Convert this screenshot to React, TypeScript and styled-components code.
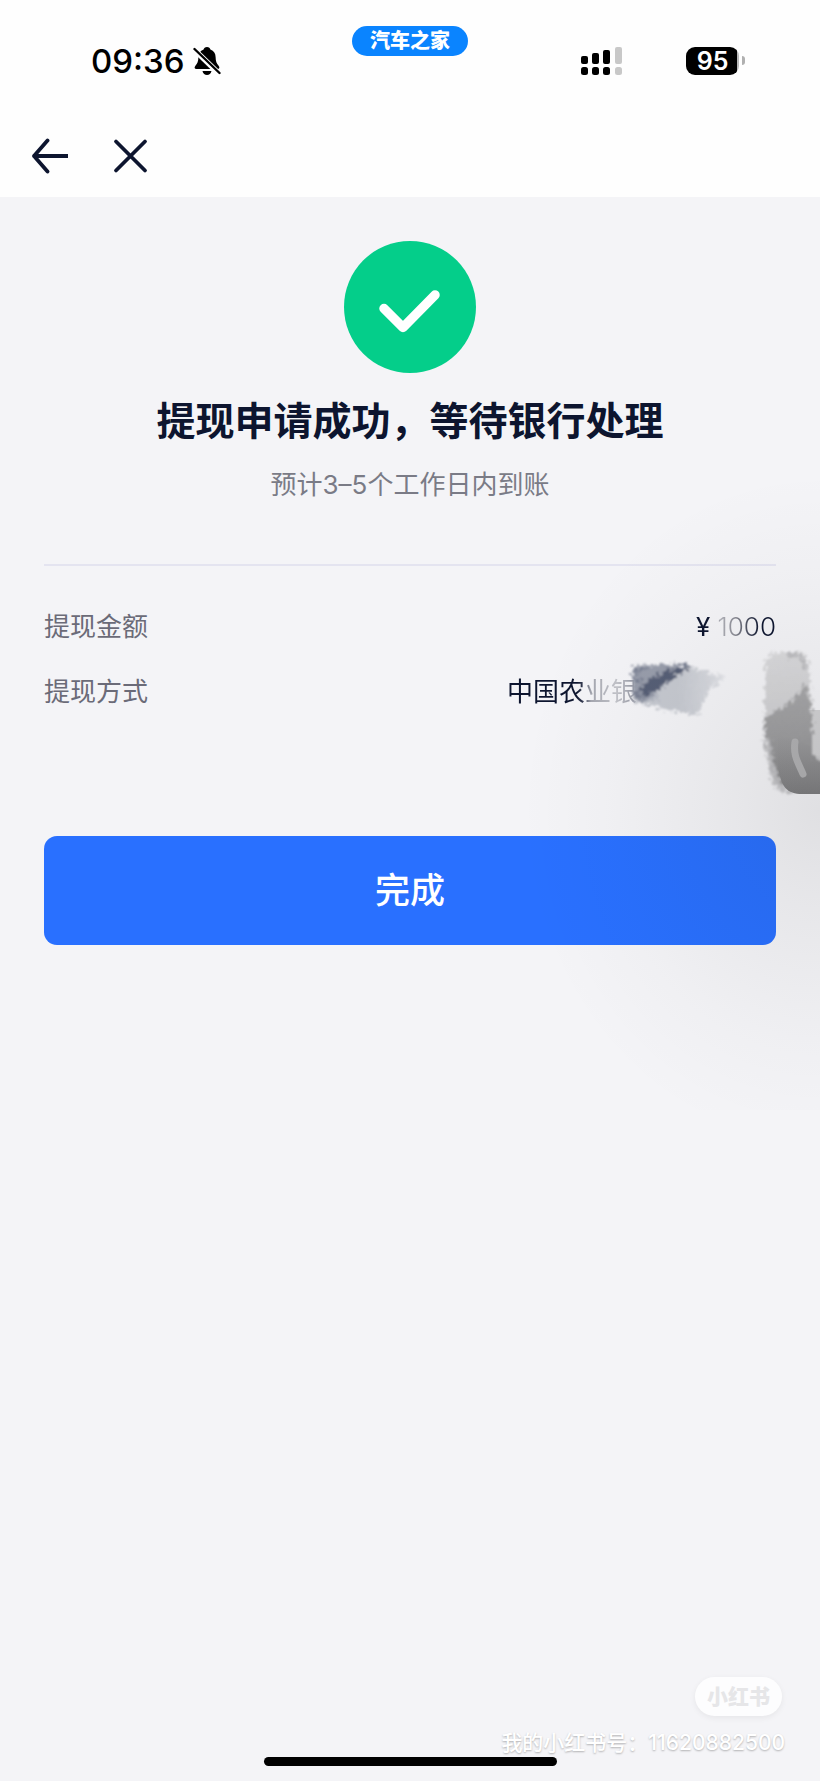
import React from "react";
import styled, { createGlobalStyle } from "styled-components";

const GlobalStyle = createGlobalStyle`
  *, *::before, *::after { box-sizing: border-box; }
  body {
    margin: 0;
    background: #f4f4f7;
    color: #0d152f;
    font-family: Inter, "Noto Sans CJK SC", sans-serif;
  }
`;

const Page = styled.div`
  position: relative;
  display: flex;
  flex-direction: column;
  min-height: 100vh;
  overflow: hidden;
`;

const Header = styled.header`
  background: #fefefe;
`;

const StatusBar = styled.div`
  display: grid;
  grid-template-columns: 1fr auto 1fr;
  align-items: center;
  height: 121px;
  color: #000;
`;

const StatusLeft = styled.div`
  display: flex;
  align-items: center;
  gap: 8px;
  padding-left: 91px;
`;

const Clock = styled.time`
  font-size: 33px;
  line-height: 40px;
  font-weight: 500;
`;

const AppPill = styled.div`
  align-self: start;
  margin-top: 26px;
  padding: 0 18px;
  border-radius: 15px;
  background: #0a84ff;
  color: #fff;
  font-size: 20px;
  line-height: 30px;
  font-weight: 900;
`;

const StatusRight = styled.div`
  display: flex;
  align-items: center;
  justify-content: flex-end;
  gap: 64px;
  padding-right: 75px;
`;

const Battery = styled.div`
  display: flex;
  align-items: center;
  gap: 3px;
`;

const BatteryBody = styled.span`
  width: 53px;
  height: 28px;
  border-radius: 9px;
  background: linear-gradient(to right, #000 51px, #b8b8b8 51px);
  color: #fff;
  font-size: 25px;
  line-height: 28px;
  font-weight: 600;
  text-align: center;
`;

const BatteryTip = styled.span`
  width: 3px;
  height: 9px;
  border-radius: 0 3px 3px 0;
  background: #b0b0b0;
`;

const NavBar = styled.nav`
  display: flex;
  align-items: center;
  gap: 42px;
  height: 76px;
  padding: 0 28px 6px;
`;

const IconButton = styled.button`
  display: flex;
  align-items: center;
  justify-content: center;
  width: 40px;
  height: 40px;
  padding: 0;
  border: 0;
  background: none;
  color: #0d152f;
`;

const Main = styled.main`
  flex: 1;
  display: flex;
  flex-direction: column;
  padding: 44px;
`;

const SuccessMark = styled.svg`
  align-self: center;
  width: 132px;
  height: 132px;
`;

const Title = styled.h1`
  margin: 24px 0 22px;
  font-size: 39px;
  line-height: 48px;
  font-weight: 700;
  text-align: center;
  white-space: nowrap;
`;

const Subtitle = styled.p`
  margin: 0;
  color: #7a7b86;
  font-size: 26px;
  line-height: 36px;
  text-align: center;
`;

const Details = styled.dl`
  position: relative;
  margin: 61px 0 112px;
  padding-top: 28px;
  border-top: 2px solid #e4e4f0;
`;

const DetailRow = styled.div`
  position: relative;
  display: flex;
  align-items: center;
  justify-content: space-between;
  height: 65px;
  font-size: 26px;
  line-height: 36px;
`;

const Label = styled.dt`
  color: #6b6b78;
`;

const Value = styled.dd<{ $fade: string; $reserve?: number }>`
  margin: 0;
  padding-right: ${(p) => p.$reserve ?? 0}px;
  background: ${(p) => p.$fade};
  background-clip: text;
  -webkit-background-clip: text;
  color: transparent;
`;

const Amount = styled.span`
  font-weight: 300;
`;

const BankSmear = styled.svg`
  position: absolute;
  right: 36px;
  top: 0;
  width: 120px;
  height: 70px;
`;

const EdgeSmear = styled.svg`
  position: absolute;
  right: -44px;
  top: 76px;
  width: 68px;
  height: 160px;
`;

const DoneButton = styled.button`
  width: 100%;
  height: 109px;
  padding: 0 0 7px;
  border: 0;
  border-radius: 13px;
  background: #2970ff;
  color: #fff;
  font-family: inherit;
  font-size: 35px;
  font-weight: 500;
`;

const Shade = styled.div`
  position: absolute;
  top: 430px;
  right: 0;
  width: 300px;
  height: 680px;
  background: radial-gradient(
    ellipse 100% 50% at 100% 56%,
    rgba(20, 20, 20, 0.09),
    rgba(20, 20, 20, 0.06) 28%,
    rgba(20, 20, 20, 0.02) 70%,
    rgba(20, 20, 20, 0)
  );
  pointer-events: none;
`;

const Footer = styled.footer`
  display: flex;
  flex-direction: column;
  align-items: flex-end;
  padding: 0 35px 15px;
`;

const Brand = styled.div`
  margin: 0 3px 15px;
  padding: 0 12px;
  border-radius: 20px;
  background: #fdfdfe;
  box-shadow: 0 2px 6px rgba(0, 0, 0, 0.06);
  color: #e6e6e8;
  font-size: 21px;
  line-height: 39px;
  font-weight: 900;
`;

const AccountId = styled.div`
  color: #fff;
  font-size: 21px;
  line-height: 24px;
  font-weight: 500;
  text-shadow: 0 1px 2px rgba(0, 0, 0, 0.28);
`;

const HomeIndicator = styled.div`
  align-self: center;
  width: 293px;
  height: 9px;
  margin-top: 2px;
  border-radius: 5px;
  background: #000;
`;

function MutedBell() {
  return (
    <svg width="28" height="28" viewBox="0 0 28 28" aria-hidden="true">
      <path
        fill="#000"
        d="M14 0c2 0 3 1 3.400 2.400C21 3.700 22.500 6.500 22.600 10c.1 4.500 1 6.500 3 8.700 1.400 1.600.9 3.300-1 3.300H3.400c-1.900 0-2.400-1.700-1-3.300 2-2.200 2.900-4.200 3-8.700.1-3.500 1.600-6.300 5.200-7.600C11 1 12 0 14 0Z"
      />
      <path fill="#000" d="M9.500 24h9c-.5 2.500-2.300 4-4.500 4s-4-1.500-4.500-4Z" />
      <path d="M1 2.500 26.500 27" stroke="#fefefe" strokeWidth="5.500" />
      <path d="M1.500 2 26.500 26" stroke="#000" strokeWidth="2.400" strokeLinecap="round" />
    </svg>
  );
}

function Signal() {
  const bars = [
    { x: 0, top: 9, color: "#000" },
    { x: 11, top: 6, color: "#000" },
    { x: 22, top: 3, color: "#000" },
    { x: 34, top: 0, color: "#c8c8c8" },
  ];
  return (
    <svg width="41" height="28" viewBox="0 0 41 28" aria-hidden="true">
      {bars.map((bar) => (
        <g key={bar.x} fill={bar.color}>
          <rect x={bar.x} y={bar.top} width="7" height={17 - bar.top} rx="2" />
          <rect x={bar.x} y="20" width="7" height="8" rx="2.500" />
        </g>
      ))}
    </svg>
  );
}

export default function App() {
  return (
    <Page>
      <GlobalStyle />
      <Header>
        <StatusBar>
          <StatusLeft>
            <Clock>09:36</Clock>
            <MutedBell />
          </StatusLeft>
          <AppPill>汽车之家</AppPill>
          <StatusRight>
            <Signal />
            <Battery>
              <BatteryBody>95</BatteryBody>
              <BatteryTip />
            </Battery>
          </StatusRight>
        </StatusBar>
        <NavBar>
          <IconButton type="button" aria-label="返回">
            <svg width="40" height="36" viewBox="0 0 40 36" fill="none" stroke="currentColor" strokeWidth="3.800">
              <path d="M41 18H6M19.500 2.500 6 18l13.500 15.500" strokeLinejoin="round" strokeLinecap="round" />
            </svg>
          </IconButton>
          <IconButton type="button" aria-label="关闭">
            <svg width="36" height="36" viewBox="0 0 36 36" fill="none" stroke="currentColor" strokeWidth="3.800">
              <path d="M4 3.500 33 32.500M33 3.500 4 32.500" strokeLinecap="round" />
            </svg>
          </IconButton>
        </NavBar>
      </Header>

      <Main>
        <SuccessMark viewBox="0 0 132 132" aria-hidden="true">
          <circle cx="66" cy="66" r="66" fill="#04ce8a" />
          <path
            d="M40 67.500 59 86.500 91 54"
            fill="none"
            stroke="#fff"
            strokeWidth="9.500"
            strokeLinecap="round"
            strokeLinejoin="round"
          />
        </SuccessMark>
        <Title>提现申请成功，等待银行处理</Title>
        <Subtitle>预计3–5个工作日内到账</Subtitle>

        <Details>
          <DetailRow>
            <Label>提现金额</Label>
            <Value $fade="linear-gradient(to right, #0d152f 22%, #b4b5bc 30%, #85868f 50%, #0d152f 80%)">
              ¥ <Amount>1000</Amount>
            </Value>
          </DetailRow>
          <DetailRow>
            <Label>提现方式</Label>
            <Value
              $reserve={139}
              $fade="linear-gradient(to right, #0d152f 70px, #3a4055 76px, #a5a7b0 84px, #c3c4ca 110px, #8d909d 130px)"
            >
              中国农业银
            </Value>
            <BankSmear viewBox="0 0 120 70" aria-hidden="true">
              <defs>
                <filter id="bankRough" x="-10%" y="-20%" width="120%" height="140%">
                  <feTurbulence type="fractalNoise" baseFrequency="0.28" numOctaves="3" seed="4" />
                  <feDisplacementMap
                    in="SourceGraphic"
                    scale="12"
                    xChannelSelector="R"
                    yChannelSelector="G"
                  />
                  <feGaussianBlur stdDeviation="0.9" />
                </filter>
                <linearGradient id="bankPale" x1="0" x2="1">
                  <stop offset="0.500" stopColor="#c6c9d0" />
                  <stop offset="0.800" stopColor="#d4d6dc" />
                  <stop offset="1" stopColor="#e6e7eb" />
                </linearGradient>
              </defs>
              <g filter="url(#bankRough)">
                <path d="M12 8 50 5 70 8 106 18 88 32 78 56 46 51 14 42Z" fill="url(#bankPale)" />
                <path d="M12 7 30 6 70 6 50 20 30 40 20 44 12 36Z" fill="#989dab" />
                <path d="M20 30 30 20 44 13 56 8 72 7 52 20 36 32 24 38Z" fill="#565e76" />
                <path d="M14 12 26 10M13 18 22 24M14 32 22 42" stroke="#737a8e" strokeWidth="3" fill="none" />
                <path d="M24 46 34 38 40 42" stroke="#aeb2bd" strokeWidth="2" fill="none" />
              </g>
            </BankSmear>
          </DetailRow>
          <EdgeSmear viewBox="0 0 68 160" aria-hidden="true">
            <defs>
              <filter id="edgeRough" x="-15%" y="-10%" width="130%" height="120%">
                <feTurbulence type="fractalNoise" baseFrequency="0.28" numOctaves="3" seed="9" />
                <feDisplacementMap
                  in="SourceGraphic"
                  scale="12"
                  xChannelSelector="R"
                  yChannelSelector="G"
                />
                <feGaussianBlur stdDeviation="0.9" />
              </filter>
              <linearGradient id="edgePale" x1="0" x2="0" y1="0" y2="1">
                <stop offset="0" stopColor="#dadadc" />
                <stop offset="1" stopColor="#c6c6c9" />
              </linearGradient>
              <linearGradient id="edgeTone" x1="0" x2="0" y1="0" y2="1">
                <stop offset="0" stopColor="#a8a8aa" />
                <stop offset="0.500" stopColor="#9e9ea0" />
                <stop offset="1" stopColor="#858587" />
              </linearGradient>
              <linearGradient id="buttonTone" x1="0" x2="0" y1="0" y2="1">
                <stop offset="0" stopColor="#9c9c9e" />
                <stop offset="1" stopColor="#7e7e80" />
              </linearGradient>
            </defs>
            <path d="M50 68H68V140H50Z" fill="#d2d2d4" />
            <g filter="url(#edgeRough)">
              <path d="M14 16 24 10 54 10 58 34 60 66 60 110 40 150 32 152 20 142 12 104Z" fill="url(#edgePale)" />
              <path d="M12 76 34 64 54 42 60 66 60 112 70 120 70 144 30 142 16 112Z" fill="url(#edgeTone)" />
              <path d="M34 12 50 14 54 26M17 96 19 118 28 144" stroke="#bcbcbf" strokeWidth="4" fill="none" />
            </g>
            <path d="M26 96C24 142 32 152 50 152H68V121L58 119V104Z" fill="url(#buttonTone)" />
            <path d="M43 100C41 114 46 120 51 132" stroke="#b2b2b4" strokeWidth="7" strokeLinecap="round" fill="none" />
          </EdgeSmear>
        </Details>

        <DoneButton type="button">完成</DoneButton>
      </Main>

      <Shade />

      <Footer>
        <Brand>小红书</Brand>
        <AccountId>我的小红书号：11620882500</AccountId>
        <HomeIndicator />
      </Footer>
    </Page>
  );
}
